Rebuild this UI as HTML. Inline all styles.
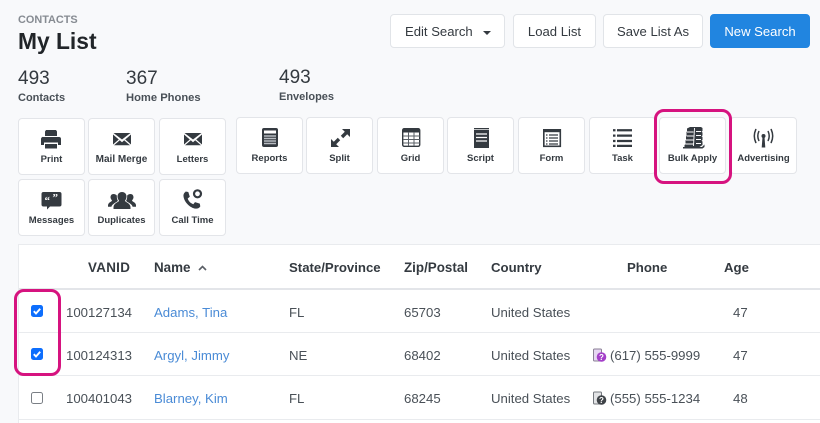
<!DOCTYPE html>
<html><head><meta charset="utf-8">
<style>
html,body{margin:0;padding:0}
body{width:820px;height:423px;overflow:hidden;background:#f8f9fb;position:relative;font-family:"Liberation Sans",sans-serif;color:#343a40}
.a{position:absolute;white-space:nowrap}
.btn{position:absolute;top:14px;height:34px;background:#fff;border:1px solid #e1e4e8;border-radius:4px;box-sizing:border-box;text-align:center;font-size:13.1px;line-height:33px;color:#343a40}
.tb{position:absolute;width:67px;height:57px;background:#fff;border:1px solid #e3e5e9;border-radius:4px;box-sizing:border-box}
.tb span{position:absolute;left:-4px;right:-4px;top:34px;text-align:center;font-size:9.5px;font-weight:bold;line-height:13px;color:#343a40;white-space:nowrap}
.tb svg{position:absolute;left:0;top:0}
.t{position:absolute;font-size:13.2px;line-height:16px;color:#495057;white-space:nowrap}
.h{position:absolute;font-size:13.4px;font-weight:bold;line-height:16px;top:260px;color:#343a40;white-space:nowrap}
.l{color:#4a8bd6}
.line{position:absolute;left:19px;width:801px;background:#e9ebee;height:1px}
.ring{position:absolute;border:3.5px solid #d6137f;box-sizing:border-box;border-radius:10px}
.cb{position:absolute;left:31px;width:12px;height:12px;border-radius:2.5px;box-sizing:border-box}
</style></head><body>
<div class="a" style="left:18px;top:13px;font-size:10.9px;font-weight:bold;line-height:14px;color:#868b92">CONTACTS</div>
<div class="a" style="left:18px;top:27px;font-size:22.8px;font-weight:bold;line-height:29px;color:#212529">My List</div>
<div class="a" style="left:18px;top:68px;font-size:19px;line-height:21px;color:#343a40">493</div>
<div class="a" style="left:18px;top:91px;font-size:11px;font-weight:bold;line-height:14px;color:#495057">Contacts</div>
<div class="a" style="left:126px;top:68px;font-size:19px;line-height:21px;color:#343a40">367</div>
<div class="a" style="left:126px;top:91px;font-size:11.2px;font-weight:bold;line-height:14px;color:#495057">Home Phones</div>
<div class="a" style="left:279px;top:67px;font-size:19px;line-height:21px;color:#343a40">493</div>
<div class="a" style="left:279px;top:90px;font-size:11px;font-weight:bold;line-height:14px;color:#495057">Envelopes</div>

<div class="btn" style="left:390px;width:115px;text-align:left;padding-left:14px">Edit Search<i style="position:absolute;left:92px;top:16px;border:4px solid transparent;border-top-color:#343a40;border-bottom:0"></i></div>
<div class="btn" style="left:513px;width:83px">Load List</div>
<div class="btn" style="left:603px;width:100px">Save List As</div>
<div class="btn" style="left:710px;width:100px;background:#2185e0;border-color:#2185e0;color:#fff">New Search</div>

<!-- Row 1 -->
<div class="tb" style="left:18px;top:118px"><svg width="67" height="36"><path fill="#343a40" d="M27 11h10l1 1.500V17H26v-4.500zM24.500 18h15.500a2 2 0 0 1 2 2v6h-3v-2.500H25V26h-3v-6a2 2 0 0 1 2.500-2zM26 25h12v4.500H26z"/></svg><span>Print</span></div>
<div class="tb" style="left:88px;top:118px"><svg width="67" height="36"><path fill="#343a40" d="M24.500 14h17l-8.500 6.500zM24 15.500l5.800 5-5.800 5zM42 15.500v10l-5.800-5zM30.800 21.300l2.200 2 2.200-2 5.800 5H25z"/></svg><span style="font-size:10px">Mail Merge</span></div>
<div class="tb" style="left:159px;top:118px"><svg width="67" height="36"><path fill="#343a40" d="M24.500 14h17l-8.500 6.500zM24 15.500l5.800 5-5.800 5zM42 15.500v10l-5.800-5zM30.800 21.300l2.200 2 2.200-2 5.800 5H25z"/></svg><span>Letters</span></div>
<div class="tb" style="left:236px;top:117px"><svg width="67" height="36"><rect x="25" y="10" width="16" height="19" rx="2" fill="#343a40"/><rect x="27" y="12.500" width="12" height="3" fill="#fff"/><path stroke="#b8bcc2" stroke-width="1.500" d="M27 18h12M27 20.500h12M27 23h12M27 25.500h12"/></svg><span>Reports</span></div>
<div class="tb" style="left:306px;top:117px"><svg width="67" height="36"><path fill="#343a40" d="M35 11h8v8l-2.800-2.800-4 4-2.400-2.400 4-4zM24 29v-8l2.800 2.800 4-4 2.400 2.400-4 4 2.800 2.800z"/></svg><span>Split</span></div>
<div class="tb" style="left:377px;top:117px"><svg width="67" height="36"><rect x="24.700" y="10.700" width="17" height="17.600" rx="1.500" fill="#fff" stroke="#343a40" stroke-width="1.400"/><rect x="25" y="11" width="16.500" height="3.500" fill="#343a40"/><path stroke="#5a5f66" stroke-width="1" fill="none" d="M25 18h17M25 21.500h17M25 25h17M30.500 14v14M36 14v14"/></svg><span>Grid</span></div>
<div class="tb" style="left:447px;top:117px"><svg width="67" height="36"><rect x="26" y="10" width="15" height="20" fill="#343a40"/><path stroke="#fff" stroke-width="1.300" d="M28 16h11M28 19.500h11M28 23h11" fill="none"/><path stroke="#fff" stroke-width=".7" d="M26 11.500h15"/></svg><span>Script</span></div>
<div class="tb" style="left:518px;top:117px"><svg width="67" height="36"><rect x="24.800" y="11.800" width="16.500" height="16.500" fill="#fff" stroke="#343a40" stroke-width="1.600"/><rect x="25" y="12" width="16" height="2.200" fill="#343a40"/><path stroke="#343a40" stroke-width="1.300" d="M27 17h1.500M30 17h9M27 20h1.500M30 20h9M27 23h1.500M30 23h9M27 26h1.500M30 26h9"/></svg><span>Form</span></div>
<div class="tb" style="left:589px;top:117px"><svg width="67" height="36"><path stroke="#343a40" stroke-width="2.300" d="M23 13h2.500M27 13h15M23 18.500h2.500M27 18.500h15M23 24h2.500M27 24h15M23 29h2.500M27 29h15" transform="translate(0 -.5) scale(1 .98)"/></svg><span>Task</span></div>
<div class="tb" style="left:659px;top:117px"><svg width="67" height="36"><path fill="#343a40" d="M27 10.500l3-1.500h11l1.500 1v3l-1 .8 1 .7v3l-1 .8 1 .7v3l-1 .8 1 .7V27l-3 2H24.500v-2l1-.7v-3.800l.5-.5v-4l.5-.5v-3.500l.5-.5z"/><path fill="#343a40" d="M23 29h19l2.500-2.500V29l-2 1.500H23z"/><path stroke="#fff" stroke-width=".9" fill="none" d="M27 14h6.500M36 13.500h5M26.500 18h7M36 17.500h5M26 22h7.500M36 21.500h5M25.500 26h8M36 25.500h5M34.500 10l-1 18"/></svg><span>Bulk Apply</span></div>
<div class="tb" style="left:730px;top:117px"><svg width="67" height="36"><circle cx="32.500" cy="18" r="2" fill="#343a40"/><path fill="#343a40" d="M31.500 19h2l.8 10.500h-3.600z"/><path fill="none" stroke="#343a40" stroke-width="1.500" stroke-linecap="round" d="M27.800 13.500q-2 4.500 0 9M37.200 13.500q2 4.500 0 9M24.800 11.500q-3 6.500 0 13M40.200 11.500q3 6.500 0 13"/></svg><span>Advertising</span></div>

<!-- Row 2 -->
<div class="tb" style="left:18px;top:179px"><svg width="67" height="36"><path fill="#343a40" d="M24.500 12h16a2 2 0 0 1 2 2v10.500a2 2 0 0 1-2 2H31l-3 3v-3h-3.500a2 2 0 0 1-2-2V14a2 2 0 0 1 2-2z"/><text x="25.500" y="24" font-size="11" font-weight="bold" fill="#fff" font-family="Liberation Serif,serif">“</text><text x="33.500" y="21" font-size="11" font-weight="bold" fill="#fff" font-family="Liberation Serif,serif">”</text></svg><span>Messages</span></div>
<div class="tb" style="left:88px;top:179px"><svg width="67" height="36"><path transform="translate(-1 0)" fill="#343a40" d="M34 12c3 0 4.500 2.300 4.500 4.600 0 2-1 3.200-1.500 4.200 0 1.300 5.500 2.300 5.500 6.400V29H25.500v-1.800c0-4.100 5.500-5.100 5.500-6.400-.5-1-1.500-2.200-1.500-4.200 0-2.300 1.500-4.600 4.500-4.600zM25.500 14c1.500 0 2.800.7 3.400 1.800-.3 1.900.3 3.700 1 4.900-.2.900-3 1.700-5.500 4.200-.5.500-.8 1.100-1 1.900H20v-1.400c0-3.200 4-3.700 4-4.900-.5-.7-1.500-1.900-1.500-3.200 0-1.900 1.200-3.300 3-3.300zM42.500 14c1.800 0 3 1.400 3 3.300 0 1.300-1 2.500-1.500 3.200 0 1.200 4 1.700 4 4.900v1.400h-3.400c-.2-.8-.5-1.400-1-1.900-2.500-2.500-5.300-3.300-5.500-4.200.7-1.200 1.300-3 1-4.900.6-1.100 1.900-1.800 3.400-1.800z"/></svg><span>Duplicates</span></div>
<div class="tb" style="left:159px;top:179px"><svg width="67" height="36"><path fill="#343a40" d="M25.500 11.500l2.800.5 1.500 4.800-2.100 1.700c.8 2.700 2.900 4.800 5.600 5.700l1.700-2.100 4.800 1.500.5 2.800c-1 1.900-2.900 2.400-4.800 2.200-5.700-.8-11.400-6.700-12-12.400-.2-1.900.7-3.600 2-4.200z"/><circle cx="37.500" cy="13.800" r="3.500" fill="none" stroke="#343a40" stroke-width="2.200"/></svg><span>Call Time</span></div>

<!-- Table -->
<div style="position:absolute;left:18px;top:244px;width:802px;height:179px;background:#fff;border:1px solid #e9ebee;border-right:0;border-bottom:0;box-sizing:border-box"></div>
<div class="line" style="top:288px;height:2px;background:#e3e5e9"></div>
<div class="line" style="top:332px"></div>
<div class="line" style="top:375px"></div>
<div class="line" style="top:419px"></div>

<div class="h" style="left:88px;letter-spacing:.3px">VANID</div>
<div class="h" style="left:154px">Name</div>
<svg style="position:absolute;left:198px;top:265px" width="9" height="6"><path d="M1 5l3.500-3.500L8 5" fill="none" stroke="#5a5f66" stroke-width="1.600"/></svg>
<div class="h" style="left:289px;font-size:13.2px">State/Province</div>
<div class="h" style="left:404px">Zip/Postal</div>
<div class="h" style="left:491px;font-size:13.2px">Country</div>
<div class="h" style="left:627px;font-size:13.2px">Phone</div>
<div class="h" style="left:724px;font-size:13.2px">Age</div>

<div class="cb" style="top:305px;background:#0d6efd"><svg width="12" height="12" style="display:block"><path d="M2.800 6.200l2.200 2.300 4.200-4.800" fill="none" stroke="#fff" stroke-width="1.900"/></svg></div>
<div class="cb" style="top:348px;background:#0d6efd"><svg width="12" height="12" style="display:block"><path d="M2.800 6.200l2.200 2.300 4.200-4.800" fill="none" stroke="#fff" stroke-width="1.900"/></svg></div>
<div class="cb" style="top:392px;background:#fff;border:1px solid #7a7f85"></div>

<div class="t" style="left:66px;top:305px">100127134</div>
<div class="t l" style="left:154px;top:305px">Adams, Tina</div>
<div class="t" style="left:289px;top:305px">FL</div>
<div class="t" style="left:404px;top:305px">65703</div>
<div class="t" style="left:491px;top:305px">United States</div>
<div class="t" style="left:733px;top:305px">47</div>

<div class="t" style="left:66px;top:348px">100124313</div>
<div class="t l" style="left:154px;top:348px">Argyl, Jimmy</div>
<div class="t" style="left:289px;top:348px">NE</div>
<div class="t" style="left:404px;top:348px">68402</div>
<div class="t" style="left:491px;top:348px">United States</div>
<svg style="position:absolute;left:592px;top:348px" width="15" height="15"><rect x="1.500" y="1" width="8" height="12" rx="1" fill="#e6d6f2" stroke="#8a7f95" stroke-width="1"/><circle cx="9.500" cy="9" r="4.800" fill="#a43fc9"/><text x="9.500" y="12" text-anchor="middle" font-size="8" font-weight="bold" fill="#fff">?</text></svg>
<div class="t" style="left:610px;top:348px">(617) 555-9999</div>
<div class="t" style="left:733px;top:348px">47</div>

<div class="t" style="left:66px;top:391px">100401043</div>
<div class="t l" style="left:154px;top:391px">Blarney, Kim</div>
<div class="t" style="left:289px;top:391px">FL</div>
<div class="t" style="left:404px;top:391px">68245</div>
<div class="t" style="left:491px;top:391px">United States</div>
<svg style="position:absolute;left:592px;top:391px" width="15" height="15"><rect x="1.500" y="1" width="8" height="12" rx="1" fill="#e2e3e5" stroke="#74787e" stroke-width="1"/><circle cx="9.500" cy="9" r="4.800" fill="#3f4348"/><text x="9.500" y="12" text-anchor="middle" font-size="8" font-weight="bold" fill="#fff">?</text></svg>
<div class="t" style="left:610px;top:391px">(555) 555-1234</div>
<div class="t" style="left:733px;top:391px">48</div>

<div class="ring" style="left:653.500px;top:109px;width:78px;height:74.500px"></div>
<div class="ring" style="left:14px;top:288.500px;width:47px;height:87.500px"></div>
</body></html>
